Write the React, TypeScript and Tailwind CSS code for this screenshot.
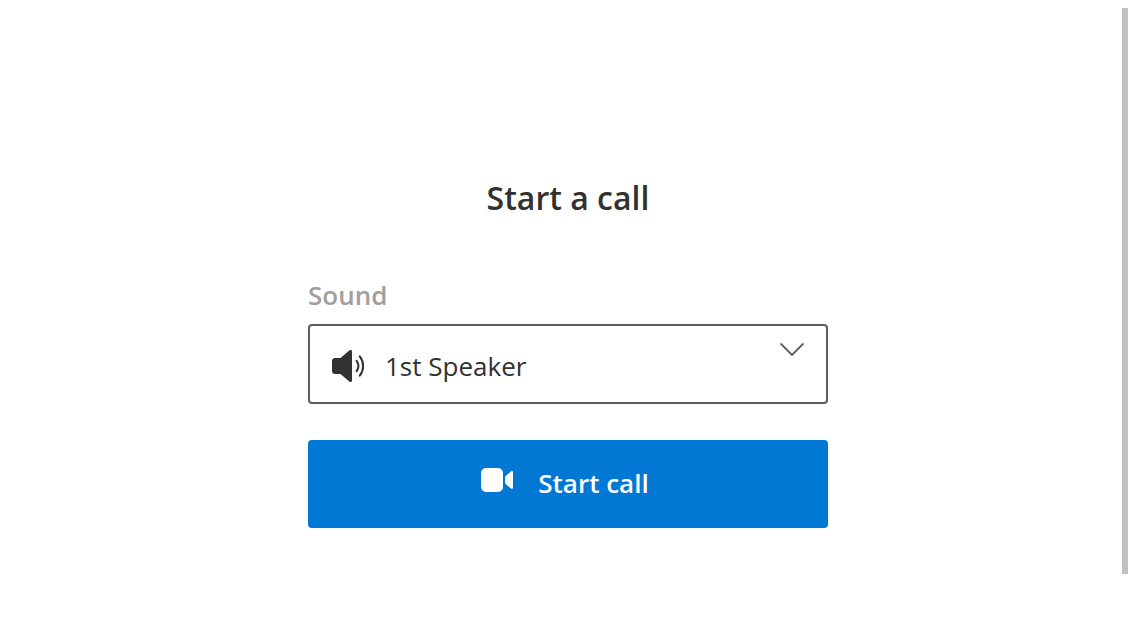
import React from "react";

function SpeakerIcon() {
  return (
    <svg className="h-8 w-[34px]" viewBox="0 0 34 32" fill="none" aria-hidden="true">
      <path
        d="M3 8H8.5L17.3 0.6C18.5 -0.4 20 0.2 20 1.6V30.4C20 31.8 18.5 32.4 17.3 31.4L8.5 24H3C1.3 24 0 22.7 0 21V11C0 9.3 1.3 8 3 8Z"
        fill="#323130"
      />
      <path d="M24.6 10.8C26.8 13.9 26.8 18.1 24.6 21.2" stroke="#323130" strokeWidth="2" strokeLinecap="round" />
      <path d="M27.8 6.4C32.2 12 32.2 20 27.8 25.6" stroke="#323130" strokeWidth="2" strokeLinecap="round" />
    </svg>
  );
}

function ChevronIcon() {
  return (
    <svg className="h-4 w-6" viewBox="0 0 24 16" fill="none" aria-hidden="true">
      <path d="M0.5 1.5L12 13L23.5 1.5" stroke="#605e5c" strokeWidth="1.9" />
    </svg>
  );
}

function CameraIcon() {
  return (
    <svg className="h-6 w-8" viewBox="0 0 32 24" fill="#ffffff" aria-hidden="true">
      <rect width="22" height="24" rx="5" />
      <path d="M24 9.8C24 9 24.3 8.3 24.9 7.8L30 3.4C30.8 2.7 32 3.2 32 4.2V19.8C32 20.8 30.8 21.3 30 20.6L24.9 16.2C24.3 15.7 24 15 24 14.2Z" />
    </svg>
  );
}

export default function App() {
  return (
    <div className="relative min-h-screen bg-white font-['Open_Sans','Noto_Sans',sans-serif] text-[#323130]">
      <main className="mx-auto flex max-w-[520px] flex-col pt-44">
        <h1 className="text-center text-[32px] leading-[44px] font-semibold">Start a call</h1>

        <label htmlFor="sound" className="mt-14 text-[26px] leading-[38px] font-semibold text-[#a19f9d]">
          Sound
        </label>
        <div className="relative mt-2.5">
          <select
            id="sound"
            defaultValue="1"
            className="h-20 w-full appearance-none rounded border-2 border-[#605e5c] bg-white pt-1 pr-14 pl-[75px] text-[26px]"
          >
            <option value="1">1st Speaker</option>
          </select>
          <span className="pointer-events-none absolute inset-y-0 left-6 flex items-center pt-1">
            <SpeakerIcon />
          </span>
          <span className="pointer-events-none absolute top-[18px] right-6">
            <ChevronIcon />
          </span>
        </div>

        <button
          type="button"
          className="mt-9 flex h-[88px] w-full items-center justify-center gap-[25px] rounded bg-[#0078d4] pr-1.5 pb-0.5 text-[26px] font-semibold text-white"
        >
          <span className="pb-1.5">
            <CameraIcon />
          </span>
          Start call
        </button>
      </main>
      <div className="absolute top-2 right-2 bottom-[66px] w-1.5 bg-[#c0c0c0]" />
    </div>
  );
}
